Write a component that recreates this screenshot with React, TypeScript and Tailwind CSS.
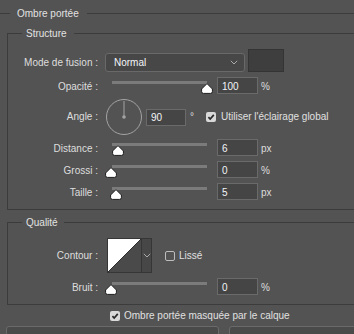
import React from "react";

const LINE = "bg-[#3c3c3c]";

function Thumb() {
  return (
    <svg width="12" height="11" viewBox="0 0 12 11">
      <path
        d="M6 0.6 L11.4 6 V8.6 Q11.4 10.4 9.6 10.4 H2.4 Q0.6 10.4 0.6 8.6 V6 Z"
        fill="#ffffff"
        stroke="#1c1c1c"
        strokeWidth="1"
        strokeLinejoin="round"
      />
    </svg>
  );
}

function Chevron() {
  return (
    <svg width="8" height="5" viewBox="0 0 8 5">
      <path d="M0.8 0.8 L4 4 L7.2 0.8" fill="none" stroke="#a9a9a9" strokeWidth="1" />
    </svg>
  );
}

function Checked() {
  return (
    <svg width="10" height="10" viewBox="0 0 10 10" className="shrink-0">
      <rect x="0" y="0" width="10" height="10" rx="2" fill="#d9d9d9" />
      <path d="M2.4 5.1 L4.2 7 L7.8 2.9" fill="none" stroke="#2a2a2a" strokeWidth="1.7" />
    </svg>
  );
}

function Label({ children, className = "" }: { children: React.ReactNode; className?: string }) {
  return (
    <div className={`w-[90px] shrink-0 text-right text-[#dedede] whitespace-nowrap ${className}`}>{children}</div>
  );
}

function NumInput({ value, className = "" }: { value: string; className?: string }) {
  return (
    <div
      className={`w-[41px] h-[17px] shrink-0 bg-[#454545] border border-[#6a6a6a] pl-[4px] pt-[2px] flex items-center text-[#f2f4f8] ${className}`}
    >
      {value}
    </div>
  );
}

function Slider({ thumb }: { thumb: string }) {
  return (
    <div className="relative w-[108px] h-[17px] shrink-0">
      <div className="absolute left-[7px] right-[6px] top-[4px] h-[3px] bg-[#7b7b7b]" />
      <div className={`absolute top-[6px] leading-none ${thumb}`}>
        <Thumb />
      </div>
    </div>
  );
}

function SliderRow({
  label,
  value,
  unit,
  thumb,
  className = "",
}: {
  label: string;
  value: string;
  unit: string;
  thumb: string;
  className?: string;
}) {
  return (
    <div className={`flex items-center h-[17px] ${className}`}>
      <Label className="pt-[3px]">{label}</Label>
      <div className="ml-[7px]">
        <Slider thumb={thumb} />
      </div>
      <NumInput value={value} className="ml-[4px]" />
      <span className="ml-[3px] pt-[3px] text-[#dedede]">{unit}</span>
    </div>
  );
}

function GroupTitle({ title, gapAfter }: { title: string; gapAfter: string }) {
  return (
    <div className="flex items-center h-[15px] -mt-[7px]">
      <div className={`w-[14px] h-px ${LINE}`} />
      <span className="ml-[4px] text-[#e2e2e2] whitespace-nowrap">{title}</span>
      <div className={`flex-1 h-px ${LINE} ${gapAfter}`} />
    </div>
  );
}

export default function App() {
  return (
    <div className="w-[354px] h-[334px] overflow-hidden bg-[#535353] font-['Liberation_Sans',Arial,sans-serif] text-[10px] leading-none pt-[6px] select-none">
      {/* Outer title */}
      <div className="flex items-center h-[15px]">
        <div className={`w-[10px] h-px ${LINE}`} />
        <span className="ml-[7px] text-[#e2e2e2] whitespace-nowrap">Ombre portée</span>
        <div className={`flex-1 h-px ml-[8px] ${LINE}`} />
      </div>

      {/* Structure */}
      <div className="mt-[12px] ml-[7px] mr-[-20px] flex flex-col border-l border-b border-[#3c3c3c] pb-[9px]">
        <GroupTitle title="Structure" gapAfter="ml-[7px]" />

        {/* Mode de fusion */}
        <div className="mt-[8px] h-[23px] flex items-end">
          <Label className="h-[19px] flex items-center justify-end">Mode de fusion :</Label>
          <div className="ml-[7px] w-[140px] h-[19px] shrink-0 rounded-[3px] bg-[#474747] border border-[#696969] flex items-center pl-[8px] pr-[6px]">
            <span className="flex-1 text-[#f4f6fa]">Normal</span>
            <Chevron />
          </div>
          <div className="ml-[3px] w-[36px] h-[23px] shrink-0 bg-[#3e3e3e] border border-[#343434]" />
        </div>

        {/* Opacité */}
        <SliderRow className="mt-[5px]" label="Opacité :" value="100" unit="%" thumb="left-[96px]" />

        {/* Angle */}
        <div className="mt-[5px] h-[36px] flex items-center">
          <Label>Angle :</Label>
          <svg width="36" height="36" viewBox="0 0 36 36" className="ml-[8px] shrink-0">
            <circle cx="18" cy="18" r="17.5" fill="none" stroke="#a3a3a3" strokeWidth="1" />
            <line x1="18" y1="2" x2="18" y2="18" stroke="#a3a3a3" strokeWidth="1" />
            <circle cx="18" cy="18" r="1.8" fill="#a3a3a3" />
          </svg>
          <div className="ml-[4px] w-[40px] h-[17px] shrink-0 bg-[#454545] border border-[#6a6a6a] pl-[4px] pt-[1px] flex items-center text-[#f2f4f8]">
            90
          </div>
          <span className="ml-[4px] text-[#dedede]">°</span>
          <div className="ml-[12px] flex items-center">
            <Checked />
            <span className="ml-[5px] text-[#e0e0e0] whitespace-nowrap">Utiliser l'éclairage global</span>
          </div>
        </div>

        <SliderRow className="mt-[4px]" label="Distance :" value="6" unit="px" thumb="left-[7px]" />
        <SliderRow className="mt-[5px]" label="Grossi :" value="0" unit="%" thumb="left-[0px]" />
        <SliderRow className="mt-[5px]" label="Taille :" value="5" unit="px" thumb="left-[5px]" />
      </div>

      {/* Qualité */}
      <div className="mt-[12px] ml-[7px] mr-[-20px] flex flex-col border-l border-b border-[#3c3c3c] pb-[9px]">
        <GroupTitle title="Qualité" gapAfter="ml-[6px]" />

        <div className="mt-[8px] h-[35px] flex items-center">
          <Label>Contour :</Label>
          <div className="ml-[9px] h-[35px] flex shrink-0 border border-[#363636]">
            <svg width="33" height="33" viewBox="0 0 33 33" className="block">
              <rect x="0" y="0" width="33" height="33" fill="#4a4a4a" />
              <path d="M0 0 H33 L0 33 Z" fill="#ffffff" />
              <path d="M0 33 L33 0" stroke="#2e2e2e" strokeWidth="1" />
            </svg>
            <div className="w-[10px] border-l border-[#363636] bg-[#474747] flex items-center justify-center">
              <Chevron />
            </div>
          </div>
          <div className="ml-[13px] w-[10px] h-[10px] shrink-0 rounded-[2px] border border-[#bdbdbd]" />
          <span className="ml-[4px] text-[#e0e0e0]">Lissé</span>
        </div>

        <SliderRow className="mt-[5px]" label="Bruit :" value="0" unit="%" thumb="left-[0px]" />
      </div>

      {/* Masked checkbox */}
      <div className="mt-[6px] h-[10px] flex items-center pl-[110px]">
        <Checked />
        <span className="ml-[4px] text-[#e0e0e0] whitespace-nowrap">Ombre portée masquée par le calque</span>
      </div>

      {/* Buttons (cut off) */}
      <div className="mt-[5px] ml-[6px] mr-[-20px] flex gap-[10px]">
        <div className="w-[213px] h-[24px] shrink-0 rounded-[3px] border border-[#6a6a6a] bg-[#4a4a4a]" />
        <div className="flex-1 h-[24px] rounded-[3px] border border-[#6a6a6a] bg-[#4a4a4a]" />
      </div>
    </div>
  );
}
